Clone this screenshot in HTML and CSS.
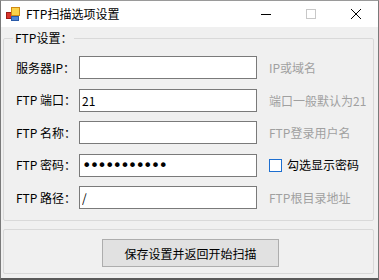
FILE: index.html
```html
<!DOCTYPE html>
<html lang="zh-CN">
<head>
    <meta charset="UTF-8">
    <title>FTP扫描选项设置</title>
    <link rel="stylesheet" href="styles.css">
</head>
<body>
    <div class="window">
        <div class="titlebar">
            <svg class="app-icon" width="16" height="16" viewBox="0 0 16 16">
                <rect x="1.5" y="6.5" width="5" height="6" fill="#d9342b" stroke="#9c1c16"/>
                <rect x="6.5" y="1.5" width="8" height="8" fill="#fbd24a" stroke="#d08a12"/>
                <rect x="6.5" y="10.5" width="7" height="4" fill="#4f86d8" stroke="#2a5aa8"/>
            </svg>
            <span class="title">FTP扫描选项设置</span>
            <div class="controls">
                <span class="ctl"><svg width="10" height="10"><line x1="0" y1="5.5" x2="10" y2="5.5" stroke="#000"/></svg></span>
                <span class="ctl"><svg width="10" height="10"><rect x="0.5" y="0.5" width="9" height="9" fill="none" stroke="#c8c8c8"/></svg></span>
                <span class="ctl"><svg width="10" height="10"><path d="M0 0L10 10M10 0L0 10" stroke="#000" stroke-width="1"/></svg></span>
            </div>
        </div>

        <div class="client">
            <fieldset class="group">
                <legend>FTP设置：</legend>
                <div class="rows">
                    <label for="host">服务器IP：</label>
                    <input type="text" id="host">
                    <span class="hint">IP或域名</span>

                    <label for="port">FTP 端口：</label>
                    <input type="text" id="port" value="21">
                    <span class="hint">端口一般默认为21</span>

                    <label for="user">FTP 名称：</label>
                    <input type="text" id="user">
                    <span class="hint">FTP登录用户名</span>

                    <label for="pass">FTP 密码：</label>
                    <input type="password" id="pass" value="12345678901">
                    <label class="check"><input type="checkbox"> 勾选显示密码</label>

                    <label for="path">FTP 路径：</label>
                    <input type="text" id="path" value="/">
                    <span class="hint">FTP根目录地址</span>
                </div>
            </fieldset>

            <div class="group actions">
                <button type="button">保存设置并返回开始扫描</button>
            </div>
        </div>
    </div>
</body>
</html>
```

FILE: styles.css
```css
* {
    box-sizing: border-box;
}
body {
    margin: 0;
    font-family: "Noto Sans CJK SC", sans-serif;
    font-size: 12px;
    color: #000;
}
.window {
    width: 379px;
    height: 280px;
    border: 1px solid #7a7a7a;
    border-top-color: #9a9a9a;
    border-bottom: 2px solid #5a5a5a;
    display: flex;
    flex-direction: column;
    background: #f0f0f0;
}
.titlebar {
    height: 26px;
    flex-shrink: 0;
    background: #fff;
    display: flex;
    align-items: center;
    padding-left: 4px;
}
.app-icon {
    margin-right: 5px;
}
.title {
    flex: 1;
    font-size: 12px;
    line-height: 16px;
}
.controls {
    display: flex;
    height: 100%;
}
.ctl {
    width: 45px;
    display: flex;
    align-items: center;
    justify-content: center;
}
.ctl svg {
    display: block;
}
.client {
    flex: 1;
    padding: 3px 4px 0 2px;
    display: flex;
    flex-direction: column;
}
.group {
    border: 1px solid #d9d9d9;
    border-radius: 2px;
    margin: 0;
}
fieldset.group {
    padding: 10px 0 11px 12px;
}
legend {
    padding: 0 2px;
    margin-left: -3px;
    line-height: 16px;
}
.rows {
    display: grid;
    grid-template-columns: 63px 178px auto;
    row-gap: 9.5px;
    align-items: center;
    white-space: nowrap;
}
.rows > label {
    line-height: 16px;
}
.rows input[type="text"],
.rows input[type="password"] {
    height: 23px;
    border: 1px solid #7a7a7a;
    background: #fff;
    padding: 0 2px;
    font-family: inherit;
    font-size: 12px;
    outline: none;
}
.rows input[type="password"] {
    font-family: "DejaVu Sans", sans-serif;
    font-size: 16px;
    letter-spacing: -1.8px;
}
.hint {
    color: #a0a0a0;
    margin-left: 12px;
}
.check {
    display: flex;
    align-items: center;
    gap: 5px;
    margin-left: 12px;
}
.check input {
    appearance: none;
    margin: 0;
    width: 13px;
    height: 13px;
    border: 1px solid #1e6fd0;
    background: #fff;
}
.actions {
    margin-top: 8px;
    height: 45px;
    flex-shrink: 0;
    display: flex;
    justify-content: center;
    padding-top: 9px;
}
button {
    width: 177px;
    height: 28px;
    background: #e1e1e1;
    border: 1px solid #adadad;
    font-family: inherit;
    font-size: 12px;
    color: #000;
    margin-left: 4px;
}
```
